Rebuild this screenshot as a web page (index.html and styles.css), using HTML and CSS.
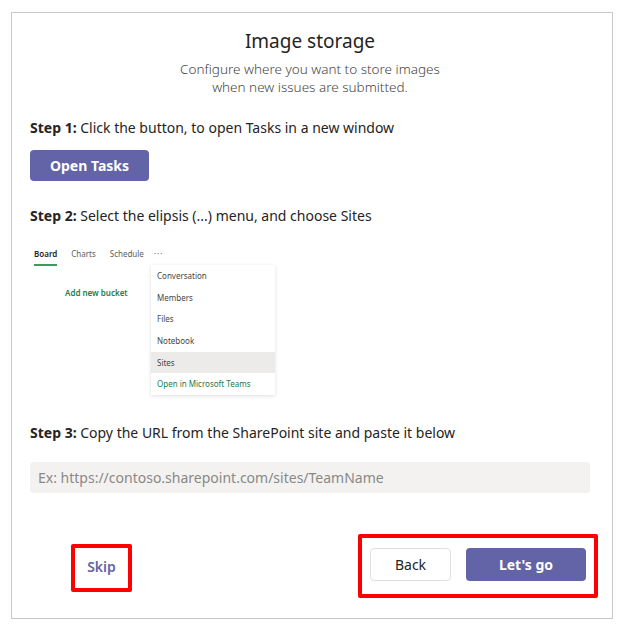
FILE: index.html
```html
<!DOCTYPE html>
<html>
<head>
<meta charset="utf-8">
<link rel="stylesheet" href="styles.css">
</head>
<body>
<div class="card">
  <h1 class="title">Image storage</h1>
  <p class="subtitle">Configure where you want to store images<br>when new issues are submitted.</p>

  <p class="step step1"><b>Step 1:</b> Click the button, to open Tasks in a new window</p>
  <button class="btn primary open">Open Tasks</button>

  <p class="step step2"><b>Step 2:</b> Select the elipsis (...) menu, and choose Sites</p>
  <div class="shot">
    <div class="tabs">
      <span class="tab active">Board</span>
      <span class="tab">Charts</span>
      <span class="tab">Schedule</span>
      <span class="tab dots">···</span>
    </div>
    <div class="bucket">Add new bucket</div>
    <ul class="menu">
      <li>Conversation</li>
      <li>Members</li>
      <li>Files</li>
      <li>Notebook</li>
      <li class="hl">Sites</li>
      <li class="green">Open in Microsoft Teams</li>
    </ul>
  </div>

  <p class="step step3"><b>Step 3:</b> Copy the URL from the SharePoint site and paste it below</p>
  <input class="url" type="text" placeholder="Ex: https://contoso.sharepoint.com/sites/TeamName">

  <div class="footer">
    <div class="mark skipbox"><button class="skip">Skip</button></div>
    <div class="mark actions">
      <button class="btn secondary">Back</button>
      <button class="btn primary go">Let's go</button>
    </div>
  </div>
</div>
</body>
</html>
```
FILE: styles.css
```css
* { box-sizing: border-box; }
html, body { margin: 0; padding: 0; background: #fff; }
body {
  font-family: "Noto Sans", "Open Sans", sans-serif;
  color: #252423;
  width: 626px;
  height: 635px;
  overflow: hidden;
}
.card {
  margin: 12px 0 0 11px;
  width: 602px;
  height: 607px;
  border: 1px solid #c8c8c8;
  padding: 16px 0 0 18px;
}
.title {
  margin: 0;
  font-size: 19px;
  line-height: 24px;
  font-weight: 400;
  text-align: center;
  padding-right: 22px;
  color: #252423;
}
.subtitle {
  margin: 7px 0 0;
  font-size: 13.5px;
  line-height: 18px;
  text-align: center;
  font-weight: 300;
  color: #484644;
  padding-right: 22px;
}
.step {
  margin: 0;
  font-size: 14px;
  line-height: 20px;
  font-weight: 400;
}
.step b { font-weight: 700; }
.step1 { margin-top: 22px; }
.btn {
  font-family: inherit;
  border-radius: 4px;
  cursor: pointer;
}
.primary {
  background: #6264a7;
  color: #fff;
  border: none;
  font-weight: 700;
  font-size: 14px;
}
.open {
  display: block;
  margin-top: 12px;
  width: 119px;
  height: 31px;
}
.step2 { margin-top: 25px; }
.shot {
  position: relative;
  height: 180px;
  margin-top: 17px;
  font-size: 8px;
  color: #605e5c;
}
.tabs {
  display: flex;
  padding-left: 4px;
  padding-top: 6px;
  line-height: 10px;
}
.tab { margin-right: 14px; padding-bottom: 5px; border-bottom: 2px solid transparent; }
.tab.active { font-weight: 600; color: #252423; border-bottom-color: #3a9a62; }
.dots { letter-spacing: 1px; margin-left: -4px; }
.bucket {
  margin: 21px 0 0 35px;
  color: #237b4b;
  font-weight: 600;
}
.menu {
  position: absolute;
  left: 121px;
  top: 22px;
  width: 124px;
  margin: 0;
  padding: 0;
  list-style: none;
  background: #fff;
  box-shadow: 0 1px 4px rgba(0,0,0,0.13);
  color: #484644;
}
.menu li {
  height: 21.7px;
  line-height: 21.7px;
  padding-left: 6px;
}
.menu .hl { background: #edebe9; }
.menu .green { color: #237b4b; }
.step3 { margin-top: 0; }
.url {
  display: block;
  margin-top: 19px;
  width: 560px;
  height: 31px;
  border: none;
  border-radius: 3px;
  background: #f3f2f1;
  padding: 0 8px;
  font-family: inherit;
  font-size: 14px;
  color: #252423;
}
.url::placeholder { color: #8a8886; }
.footer {
  display: flex;
  align-items: center;
  justify-content: space-between;
  margin-top: 41px;
  padding: 0 14px 0 41px;
}
.mark { border: 4px solid #ff0000; border-radius: 2px; }
.skipbox {
  width: 61px;
  height: 48px;
  display: flex;
  align-items: center;
  justify-content: center;
  margin-top: 4px;
  padding-bottom: 3px;
}
.skip {
  background: none;
  border: none;
  padding: 0;
  font-family: inherit;
  font-size: 14px;
  font-weight: 600;
  color: #6264a7;
}
.actions {
  display: flex;
  gap: 15px;
  padding: 10px 8px 13px 8px;
}
.secondary {
  width: 81px;
  height: 33px;
  background: #fff;
  border: 1px solid #e1dfdd;
  font-size: 14px;
  font-weight: 400;
  color: #252423;
}
.go { width: 120px; height: 33px; }
```
